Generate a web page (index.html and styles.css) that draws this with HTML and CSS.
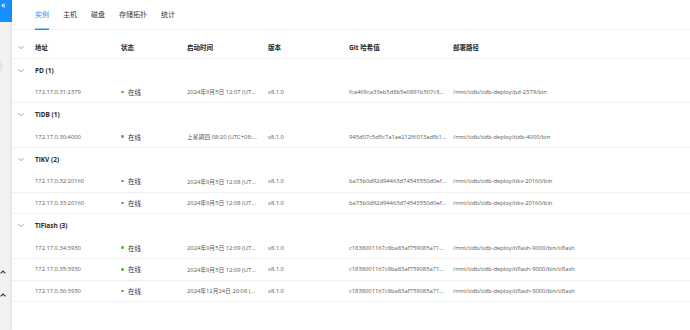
FILE: index.html
```html
<!DOCTYPE html>
<html lang="zh-CN">
<head>
<meta charset="utf-8">
<title>集群信息</title>
<link rel="stylesheet" href="styles.css">
</head>
<body>
<div class="app">
  <aside class="sidebar">
    <div class="brand">
      <svg class="brand-icon" width="4" height="5" viewBox="0 0 4 5"><rect x="2.6" y="0.5" width="1" height="4" fill="#fff"/><path d="M2.2 0.8 L0.4 2.5 L2.2 4.2 Z" fill="#fff"/></svg>
    </div>
    <div class="avatar"></div>
    <div class="sidebar-spacer"></div>
    <svg class="up" width="6" height="4" viewBox="0 0 6 4"><path d="M0.6 3.4 L3 1 L5.4 3.4" fill="none" stroke="#333" stroke-width="1.2"/></svg>
    <svg class="up up2" width="6" height="4" viewBox="0 0 6 4"><path d="M0.6 3.4 L3 1 L5.4 3.4" fill="none" stroke="#333" stroke-width="1.2"/></svg>
  </aside>
  <main class="content">
    <nav class="tabs">
      <span class="tab active">实例</span>
      <span class="tab">主机</span>
      <span class="tab">磁盘</span>
      <span class="tab">存储拓扑</span>
      <span class="tab">统计</span>
    </nav>
    <div class="table">
      <div class="row head">
        <span class="cell chev"><svg width="6" height="3" viewBox="0 0 6 3"><path d="M0.3 0.3 L3 2.6 L5.7 0.3" fill="none" stroke="#8c8c8c" stroke-width="0.8"/></svg></span>
        <span class="cell">地址</span>
        <span class="cell">状态</span>
        <span class="cell">启动时间</span>
        <span class="cell">版本</span>
        <span class="cell">Git 哈希值</span>
        <span class="cell">部署路径</span>
      </div>

      <div class="row group">
        <span class="cell chev"><svg width="6" height="3" viewBox="0 0 6 3"><path d="M0.3 0.3 L3 2.6 L5.7 0.3" fill="none" stroke="#8c8c8c" stroke-width="0.8"/></svg></span>
        <span class="cell gname">PD (1)</span>
      </div>
      <div class="row data">
        <span class="cell"></span>
        <span class="cell">172.17.0.31:2379</span>
        <span class="cell status"><i class="dot"></i>在线</span>
        <span class="cell">2024年9月5日 12:07 (UT...</span>
        <span class="cell">v8.1.0</span>
        <span class="cell">fca469ca33eb5d8b5e0891b507c8...</span>
        <span class="cell">/mnt/tidb/tidb-deploy/pd-2379/bin</span>
      </div>

      <div class="row group">
        <span class="cell chev"><svg width="6" height="3" viewBox="0 0 6 3"><path d="M0.3 0.3 L3 2.6 L5.7 0.3" fill="none" stroke="#8c8c8c" stroke-width="0.8"/></svg></span>
        <span class="cell gname">TiDB (1)</span>
      </div>
      <div class="row data">
        <span class="cell"></span>
        <span class="cell">172.17.0.30:4000</span>
        <span class="cell status"><i class="dot"></i>在线</span>
        <span class="cell">上星期四 08:20 (UTC+08:...</span>
        <span class="cell">v8.1.0</span>
        <span class="cell">945d07c5d5c7a1ae212f6013adfb1...</span>
        <span class="cell">/mnt/tidb/tidb-deploy/tidb-4000/bin</span>
      </div>

      <div class="row group">
        <span class="cell chev"><svg width="6" height="3" viewBox="0 0 6 3"><path d="M0.3 0.3 L3 2.6 L5.7 0.3" fill="none" stroke="#8c8c8c" stroke-width="0.8"/></svg></span>
        <span class="cell gname">TiKV (2)</span>
      </div>
      <div class="row data">
        <span class="cell"></span>
        <span class="cell">172.17.0.32:20160</span>
        <span class="cell status"><i class="dot"></i>在线</span>
        <span class="cell">2024年9月5日 12:08 (UT...</span>
        <span class="cell">v8.1.0</span>
        <span class="cell">ba73b0d92d94463d74543550d0ef...</span>
        <span class="cell">/mnt/tidb/tidb-deploy/tikv-20160/bin</span>
      </div>
      <div class="row data">
        <span class="cell"></span>
        <span class="cell">172.17.0.33:20160</span>
        <span class="cell status"><i class="dot"></i>在线</span>
        <span class="cell">2024年9月5日 12:08 (UT...</span>
        <span class="cell">v8.1.0</span>
        <span class="cell">ba73b0d92d94463d74543550d0ef...</span>
        <span class="cell">/mnt/tidb/tidb-deploy/tikv-20160/bin</span>
      </div>

      <div class="row group">
        <span class="cell chev"><svg width="6" height="3" viewBox="0 0 6 3"><path d="M0.3 0.3 L3 2.6 L5.7 0.3" fill="none" stroke="#8c8c8c" stroke-width="0.8"/></svg></span>
        <span class="cell gname">TiFlash (3)</span>
      </div>
      <div class="row data">
        <span class="cell"></span>
        <span class="cell">172.17.0.34:3930</span>
        <span class="cell status"><i class="dot"></i>在线</span>
        <span class="cell">2024年9月5日 12:09 (UT...</span>
        <span class="cell">v8.1.0</span>
        <span class="cell">c1838001167c8ba83af759085a71...</span>
        <span class="cell">/mnt/tidb/tidb-deploy/tiflash-9000/bin/tiflash</span>
      </div>
      <div class="row data">
        <span class="cell"></span>
        <span class="cell">172.17.0.35:3930</span>
        <span class="cell status"><i class="dot"></i>在线</span>
        <span class="cell">2024年9月5日 12:09 (UT...</span>
        <span class="cell">v8.1.0</span>
        <span class="cell">c1838001167c8ba83af759085a71...</span>
        <span class="cell">/mnt/tidb/tidb-deploy/tiflash-9000/bin/tiflash</span>
      </div>
      <div class="row data">
        <span class="cell"></span>
        <span class="cell">172.17.0.36:3930</span>
        <span class="cell status"><i class="dot"></i>在线</span>
        <span class="cell">2024年12月24日 20:08 (...</span>
        <span class="cell">v8.1.0</span>
        <span class="cell">c1838001167c8ba83af759085a71...</span>
        <span class="cell">/mnt/tidb/tidb-deploy/tiflash-9000/bin/tiflash</span>
      </div>
    </div>
  </main>
</div>
</body>
</html>
```

FILE: styles.css
```css
* { box-sizing: border-box; }
html, body { margin: 0; padding: 0; }
body {
  width: 690px;
  height: 330px;
  overflow: hidden;
  font-family: "Open Sans", "Noto Sans CJK SC", sans-serif;
  color: #262626;
  background: #fff;
}
.app {
  display: flex;
  height: 330px;
}
.sidebar {
  width: 12px;
  flex: none;
  background: #f2f2f2;
  display: flex;
  flex-direction: column;
  overflow: hidden;
}
.brand {
  height: 22px;
  background: #1890ff;
  padding: 3px 0 0 1px;
  flex: none;
}
.brand-icon { display: block; }
.avatar {
  width: 13px;
  height: 13px;
  border-radius: 50%;
  background: #e6e6e6;
  margin: 38px 0 0 -10px;
  flex: none;
}
.sidebar-spacer { height: 197px; flex: none; }
.up { display: block; margin-left: 0; flex: none; }
.up2 { margin-top: 18.5px; }

.content {
  flex: 1;
  background: #fff;
  box-shadow: -1px 0 3px rgba(0,0,0,0.08);
  position: relative;
  min-width: 0;
}
.tabs {
  height: 30px;
  display: flex;
  gap: 14px;
  padding-left: 23px;
  border-bottom: 1px solid #f0f0f0;
}
.tab {
  font-size: 7px;
  line-height: 30px;
  height: 30px;
  color: #333;
}
.tab.active {
  color: #1890ff;
  box-shadow: inset 0 -1.5px 0 #1890ff;
}
.table { margin-top: 7px; }
.row {
  display: grid;
  grid-template-columns: 23px 86px 66px 81px 81px 104px 1fr;
  align-items: center;
  border-bottom: 1px solid #f0f0f0;
}
.cell {
  font-size: 5.8px;
  white-space: nowrap;
  color: #595959;
  min-width: 0;
}
.head { height: 21.5px; }
.head .cell {
  font-size: 6.5px;
  font-weight: 700;
  color: #262626;
}
.chev {
  padding: 0 0 0 6px;
  display: flex;
  align-items: center;
}
.chev svg { display: block; }
.group { height: 23px; border-bottom: none; }
.gname {
  grid-column: 2 / -1;
  font-size: 6.5px;
  font-weight: 700;
  color: #262626;
}
.data { height: 21.7px; }
.status {
  font-size: 6.5px;
  color: #333;
  display: flex;
  align-items: center;
}
.dot {
  width: 2.5px;
  height: 2.5px;
  border-radius: 50%;
  background: #52c41a;
  margin-right: 4.5px;
  flex: none;
}
```
